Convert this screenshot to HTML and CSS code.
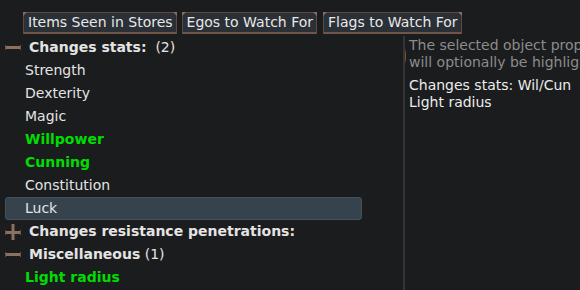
FILE: index.html
```html
<!DOCTYPE html>
<html>
<head>
    <title>Object Properties</title>
    <link rel="stylesheet" href="styles.css">
</head>
<body>
    <div class="tabs">
        <div class="tab">Items Seen in Stores</div>
        <div class="tab">Egos to Watch For</div>
        <div class="tab third">Flags to Watch For</div>
    </div>

    <div class="main">
        <div class="tree">
            <div class="row head">
                <svg class="toggle" width="16" height="16" viewBox="0 0 16 16"><rect x="0" y="6" width="16" height="3" fill="#8c7060"/><rect x="0" y="5" width="1" height="5" fill="#6a5244"/><rect x="15" y="5" width="1" height="5" fill="#6a5244"/></svg>
                <span class="label"><b>Changes stats:</b>&nbsp; (2)</span>
            </div>
            <div class="row item">Strength</div>
            <div class="row item">Dexterity</div>
            <div class="row item">Magic</div>
            <div class="row item on">Willpower</div>
            <div class="row item on">Cunning</div>
            <div class="row item">Constitution</div>
            <div class="row item selected">Luck</div>
            <div class="row head">
                <svg class="toggle" width="16" height="16" viewBox="0 0 16 16"><rect x="0" y="7" width="16" height="3" fill="#8c7060"/><rect x="6.5" y="0" width="3" height="16" fill="#8c7060"/><rect x="0" y="6" width="1" height="5" fill="#6a5244"/><rect x="15" y="6" width="1" height="5" fill="#6a5244"/></svg>
                <span class="label"><b>Changes resistance penetrations:</b></span>
            </div>
            <div class="row head">
                <svg class="toggle" width="16" height="16" viewBox="0 0 16 16"><rect x="0" y="6" width="16" height="3" fill="#8c7060"/><rect x="0" y="5" width="1" height="5" fill="#6a5244"/><rect x="15" y="5" width="1" height="5" fill="#6a5244"/></svg>
                <span class="label"><b>Miscellaneous</b> (1)</span>
            </div>
            <div class="row item on">Light radius</div>
        </div>

        <div class="info">
            <svg class="flame" width="8" height="36" viewBox="0 0 8 36"><path d="M2 0 C5 8 7 16 5 26 C4 31 3 34 2 36 C1 28 0 20 1 12 C1 7 2 3 2 0 Z" fill="#9a6a2a"/><path d="M2.5 4 C4 12 4.5 20 3 30 C2 22 1.8 14 2.5 4 Z" fill="#d09a4a"/></svg>
            <p class="note">The selected object properties<br>will optionally be highlighted</p>
            <p class="summary">Changes stats: Wil/Cun<br>Light radius</p>
        </div>
    </div>
</body>
</html>
```

FILE: styles.css
```css
body {
    margin: 0;
    background-color: #1b1c1d;
    font-family: "DejaVu Sans", sans-serif;
    font-size: 14px;
    color: #e4e4e4;
    width: 580px;
    height: 290px;
    overflow: hidden;
}
.tabs {
    display: flex;
    gap: 5px;
    padding: 12px 0 0 23px;
    height: 23px;
}
.tab {
    position: relative;
    height: 19px;
    line-height: 19px;
    padding: 0 3px 0 4px;
    background-color: #2b3036;
    border: 1px solid #5c4a40;
    border-bottom: 2px solid #6e5648;
    color: #e8e8e8;
    white-space: nowrap;
}
.tab::before,
.tab::after {
    content: "";
    position: absolute;
    top: -1px;
    width: 0;
    height: 0;
    border-top: 4px solid #8a6c5c;
}
.tab::before {
    left: -1px;
    border-right: 4px solid transparent;
}
.tab::after {
    right: -1px;
    border-left: 4px solid transparent;
}
.tab.third {
    margin-left: 1px;
}
.main {
    display: flex;
    height: 255px;
    padding-top: 1px;
}
.tree {
    width: 357px;
    padding-left: 5px;
    flex-shrink: 0;
}
.row {
    height: 23px;
    line-height: 23px;
    white-space: nowrap;
}
.head {
    display: flex;
    align-items: center;
}
.head .label {
    margin-left: 8px;
}
.toggle {
    flex-shrink: 0;
}
.item {
    padding-left: 20px;
}
.item.on {
    color: #00dd00;
    font-weight: bold;
}
.item.selected {
    background-color: #36434c;
    border: 1px solid #44525c;
    border-radius: 3px;
    height: 21px;
    line-height: 21px;
    padding-left: 19px;
}
.info {
    position: relative;
    margin-left: 41px;
    border-left: 2px solid #343536;
    padding-left: 4px;
    flex: 1;
    overflow: hidden;
    white-space: nowrap;
}
.flame {
    position: absolute;
    left: -5px;
    top: 2px;
}
.note {
    margin: 1px 0 0;
    line-height: 17px;
    color: #8c8c8c;
}
.summary {
    margin: 6px 0 0;
    line-height: 17px;
    color: #ececec;
}
```
